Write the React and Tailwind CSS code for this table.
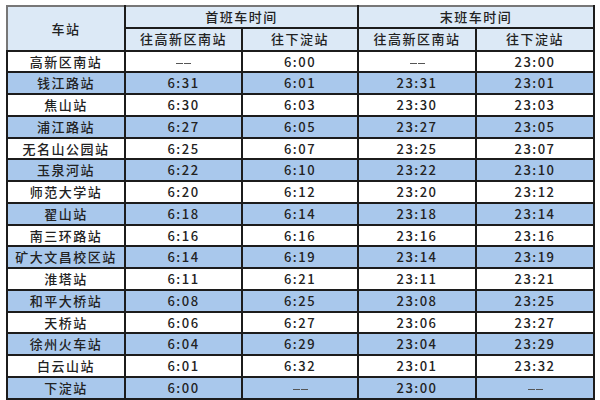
import React from 'react';

const rows = [
  ['高新区南站', '-', '6:00', '-', '23:00'],
  ['钱江路站', '6:31', '6:01', '23:31', '23:01'],
  ['焦山站', '6:30', '6:03', '23:30', '23:03'],
  ['浦江路站', '6:27', '6:05', '23:27', '23:05'],
  ['无名山公园站', '6:25', '6:07', '23:25', '23:07'],
  ['玉泉河站', '6:22', '6:10', '23:22', '23:10'],
  ['师范大学站', '6:20', '6:12', '23:20', '23:12'],
  ['翟山站', '6:18', '6:14', '23:18', '23:14'],
  ['南三环路站', '6:16', '6:16', '23:16', '23:16'],
  ['矿大文昌校区站', '6:14', '6:19', '23:14', '23:19'],
  ['淮塔站', '6:11', '6:21', '23:11', '23:21'],
  ['和平大桥站', '6:08', '6:25', '23:08', '23:25'],
  ['天桥站', '6:06', '6:27', '23:06', '23:27'],
  ['徐州火车站', '6:04', '6:29', '23:04', '23:29'],
  ['白云山站', '6:01', '6:32', '23:01', '23:32'],
  ['下淀站', '6:00', '-', '23:00', '-'],
];

const font = { fontFamily: '"Noto Sans CJK SC", "Noto Sans", sans-serif' };

const Cell = ({ children, className = '', ...rest }) => (
  <td className={`border-2 border-[#1c1c1c] text-center align-middle p-0 ${className}`} {...rest}>
    {children}
  </td>
);

const Dash = () => (
  <span className="inline-flex gap-[1px] align-middle">
    <span className="w-[7px] h-[1px] bg-[#555]" />
    <span className="w-[7px] h-[1px] bg-[#555]" />
  </span>
);

export default function App() {
  return (
    <div className="w-[600px] h-[400px] bg-white pl-[6px] pt-[5px]" style={font}>
      <table className="w-[587px] border-collapse table-fixed text-[13px] tracking-[1.5px] text-[#222] font-medium">
        <colgroup>
          <col className="w-[118px]" />
          <col className="w-[117px]" />
          <col className="w-[116px]" />
          <col className="w-[118px]" />
          <col className="w-[118px]" />
        </colgroup>
        <thead className="bg-[#dce9f6]">
          <tr className="h-[20px]">
            <Cell className="border-t-[#777] border-l-[#777]" rowSpan={2}>
              车站
            </Cell>
            <Cell className="border-t-[#777]" colSpan={2}>首班车时间</Cell>
            <Cell className="border-t-[#777]" colSpan={2}>末班车时间</Cell>
          </tr>
          <tr className="h-[23px]">
            <Cell>往高新区南站</Cell>
            <Cell>往下淀站</Cell>
            <Cell>往高新区南站</Cell>
            <Cell>往下淀站</Cell>
          </tr>
        </thead>
        <tbody>
          {rows.map((r, i) => (
            <tr key={r[0]} className={`h-[21.75px] ${i % 2 === 1 ? 'bg-[#a9c8ec]' : 'bg-white'}`}>
              {r.map((v, j) => (
                <Cell key={j}>{v === '-' ? <Dash /> : v}</Cell>
              ))}
            </tr>
          ))}
        </tbody>
      </table>
    </div>
  );
}
